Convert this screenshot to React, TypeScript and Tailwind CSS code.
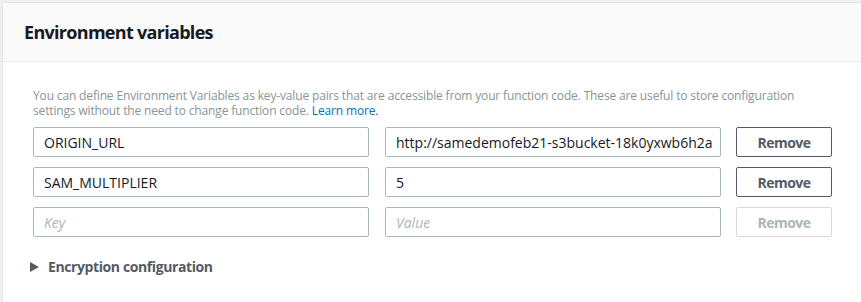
import React from "react";

const font = { fontFamily: '"Open Sans", "Noto Sans", sans-serif' };

interface EnvRow {
  key: string;
  value: string;
}

const rows: EnvRow[] = [
  { key: "ORIGIN_URL", value: "http://samedemofeb21-s3bucket-18k0yxwb6h2a" },
  { key: "SAM_MULTIPLIER", value: "5" },
];

const TextBox = ({ value, placeholder }: { value?: string; placeholder: string }) => (
  <div className="flex h-[30px] w-[336px] items-center overflow-hidden whitespace-nowrap rounded-[2px] border border-[#aab7b8] bg-white px-[10px] text-[14px]">
    {value ? (
      <span className="text-[#16191f]">{value}</span>
    ) : (
      <span className="italic text-[#aab7b8]">{placeholder}</span>
    )}
  </div>
);

const RemoveButton = ({ disabled }: { disabled?: boolean }) => (
  <button
    className={
      disabled
        ? "ml-[-1px] h-[30px] w-[96px] rounded-[2px] border border-[#d5dbdb] bg-white text-[14px] font-bold tracking-[-0.5px] text-[#aab7b8]"
        : "ml-[-1px] h-[30px] w-[96px] rounded-[2px] border border-[#545b64] bg-white text-[14px] font-bold tracking-[-0.5px] text-[#545b64]"
    }
  >
    Remove
  </button>
);

const App = () => {
  return (
    <div className="h-[302px] w-[861px] bg-[#eef0f0] pl-[2px] pt-[2px]" style={font}>
      <div className="h-full border-l border-t border-[#e4e7e7] bg-white">
        <div className="flex h-[59px] items-center border-b border-[#eaeded] bg-[#fafafa] pl-[21px]">
          <h2 className="text-[18px] font-bold tracking-[-0.7px] text-[#16191f]">Environment variables</h2>
        </div>

        <div className="pl-[30px] pt-[26px]">
          <p className="w-[800px] text-[12px] leading-[15px] tracking-[-0.15px] text-[#879596]">
            You can define Environment Variables as key-value pairs that are accessible from your function code. These are useful to store configuration settings without the need to change function code.{" "}
            <span className="text-[#0073bb]">Learn more.</span>
          </p>

          <div className="mt-[9px] flex flex-col gap-[10px]">
            {rows.map((row) => (
              <div key={row.key} className="flex items-center gap-[16px]">
                <TextBox value={row.key} placeholder="Key" />
                <TextBox value={row.value} placeholder="Value" />
                <RemoveButton />
              </div>
            ))}
            <div className="flex items-center gap-[16px]">
              <TextBox placeholder="Key" />
              <TextBox placeholder="Value" />
              <RemoveButton disabled />
            </div>
          </div>

          <div className="mt-[19px] flex items-center gap-[9px] text-[14px] font-bold tracking-[-0.4px] text-[#545b64]">
            <svg width="9" height="10" viewBox="0 0 9 10" className="ml-[-3px]">
              <path d="M0 0 L9 5 L0 10 Z" fill="#545b64" />
            </svg>
            <span>Encryption configuration</span>
          </div>
        </div>
      </div>
    </div>
  );
};

export default App;
